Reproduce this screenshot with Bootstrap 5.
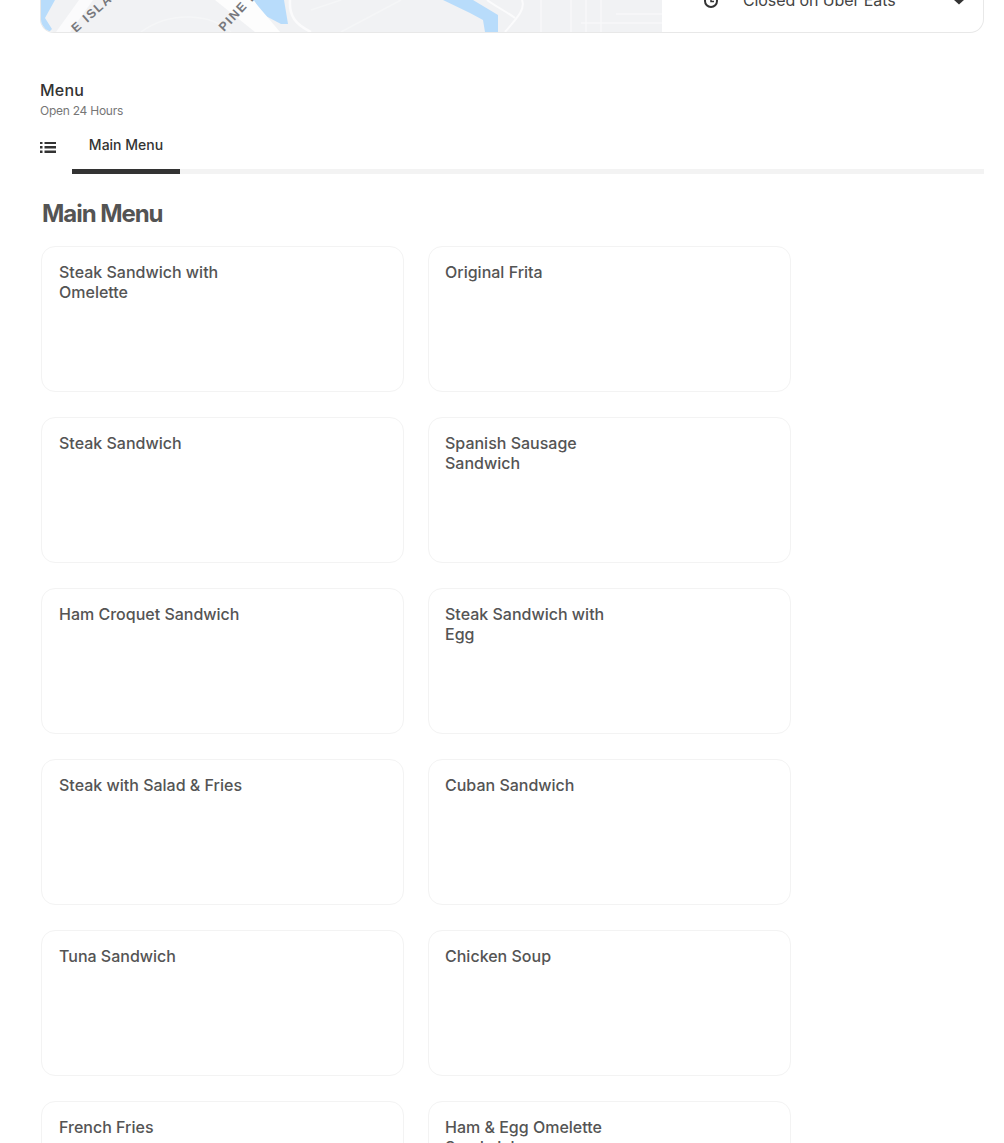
<!DOCTYPE html>
<html lang="en">
<head>
    <meta charset="UTF-8">
    <meta name="viewport" content="width=device-width, initial-scale=1.0">
    <title>Main Menu</title>
    <link href="https://cdn.jsdelivr.net/npm/bootstrap@5.3.0/dist/css/bootstrap.min.css" rel="stylesheet">
    <style>
        html, body { height: 1143px; overflow: hidden; }
        body { background: #fff; font-family: Inter, "Liberation Sans", sans-serif; color: #333; }
        .page-wrap { padding: 0 20px 0 40px; }
        .top-panel { height: 33px; border: 1px solid #e8e8e8; border-top: 0; border-radius: 0 0 14px 14px; overflow: hidden; }
        .map-pane { width: 621px; height: 32px; flex: none; }
        .status-pane { padding: 0 18px 0 41px; height: 44px; margin-top: -12px; }
        .status-icon { margin-top: 5px; flex: none; }
        .status-text { font-size: 16px; line-height: 24px; letter-spacing: -.1px; color: #444; margin-left: 24px; }
        .status-caret { margin-top: 7px; flex: none; }
        .menu-head { margin-top: 47px; }
        .menu-title { font-size: 16px; line-height: 20px; font-weight: 500; letter-spacing: .2px; color: #333; }
        .menu-sub { font-size: 12px; line-height: 22px; letter-spacing: -.25px; color: #767676; }
        .tabs-row { margin-top: 8px; height: 44px; }
        .tabs-icon { width: 32px; padding-top: 9px; }
        .tabs-track { border-bottom: 5px solid #f3f3f3; height: 44px; }
        .tab-active { width: 108px; height: 44px; border-bottom: 5px solid #333; font-size: 14px; font-weight: 500; text-align: center; padding-top: 5px; line-height: 20px; color: #333; }
        .section-title { font-size: 24px; line-height: 32px; font-weight: 700; letter-spacing: -1.05px; color: #545454; margin: 24px 0 16px 2px; }
        .item-grid { display: grid; grid-template-columns: 363px 363px; column-gap: 24px; row-gap: 25px; margin-left: 1px; }
        .item-card { height: 146px; border: 1px solid #f3f3f3; border-radius: 14px; padding: 15px 17px; }
        .item-card:nth-child(even) { padding-left: 16px; }
        .item-name { width: 190px; font-size: 16px; line-height: 20px; font-weight: 500; color: #545454; }
    </style>
</head>
<body>
    <div class="page-wrap">
        <div class="top-panel d-flex">
            <div class="map-pane">
                <svg class="d-block" width="621" height="32" viewBox="0 0 621 32">
                    <rect width="621" height="32" fill="#f1f2f4"/>
                    <!-- water -->
                    <path d="M0 0H14L4 18 11 29 8 32H0Z" fill="#b8dcfb"/>
                    <path d="M213 0H243L247 24H240L221 14Z" fill="#b8dcfb"/>
                    <path d="M402 0H432L457 15V32H444L442 20 429 13Z" fill="#b8dcfb"/>
                    <!-- roads -->
                    <path d="M38 0H52L29 32H15Z" fill="#fbfbfc"/>
                    <path d="M174 0H212L239 32H214Z" fill="#fdfdfd"/>
                    <path d="M249 0C248 16 254 24 270 32" stroke="#fbfbfc" stroke-width="2.5" fill="none"/>
                    <path d="M446 0C454 6 466 12 474 18M481 0C485 10 474 20 464 32" stroke="#fbfbfc" stroke-width="2" fill="none"/>
                    <path d="M500 0V32M530 0V32M545 0V32M560 0V32M575 14H621M540 23H621" stroke="#f7f8f9" stroke-width="1.5" fill="none"/>
                    <path d="M100 32C130 10 170 14 190 32M270 10L300 0M300 32L360 0" stroke="#f5f6f7" stroke-width="1.5" fill="none"/>
                    <!-- street labels -->
                    <text x="35" y="33" transform="rotate(-42 35 33)" font-family="Liberation Sans, sans-serif" font-size="12.5" font-weight="700" letter-spacing="1.6" fill="#77787c">E ISLA</text>
                    <text x="183" y="32" transform="rotate(-47 183 32)" font-family="Liberation Sans, sans-serif" font-size="12.5" font-weight="700" letter-spacing="1.6" fill="#77787c">PINE I</text>
                </svg>
            </div>
            <div class="status-pane flex-grow-1 d-flex align-items-start">
                <svg class="status-icon" width="16" height="16" viewBox="0 0 16 16">
                    <circle cx="8" cy="8" r="6" fill="none" stroke="#333" stroke-width="2"/>
                    <path d="M8 4.5V8.5H11" fill="none" stroke="#333" stroke-width="1.5"/>
                </svg>
                <span class="status-text flex-grow-1">Closed on Uber Eats</span>
                <svg class="status-caret" width="12" height="12" viewBox="0 0 12 12">
                    <path d="M0 4H12L6 9.5Z" fill="#333"/>
                </svg>
            </div>
        </div>

        <div class="menu-head">
            <div class="menu-title">Menu</div>
            <div class="menu-sub">Open 24 Hours</div>
        </div>

        <div class="tabs-row d-flex">
            <div class="tabs-icon">
                <svg class="d-block" width="16" height="16" viewBox="0 0 16 16">
                    <path d="M0 3H2.5V5H0ZM0 7H2.5V9.5H0ZM0 11.5H2.5V14H0ZM4.5 3H16V5H4.5ZM4.5 7H16V9.5H4.5ZM4.5 11.5H16V14H4.5Z" fill="#333"/>
                </svg>
            </div>
            <div class="tabs-track flex-grow-1">
                <div class="tab-active">Main Menu</div>
            </div>
        </div>

        <div class="section-title">Main Menu</div>

        <div class="item-grid">
            <div class="item-card"><div class="item-name">Steak Sandwich with Omelette</div></div>
            <div class="item-card"><div class="item-name">Original Frita</div></div>
            <div class="item-card"><div class="item-name">Steak Sandwich</div></div>
            <div class="item-card"><div class="item-name">Spanish Sausage Sandwich</div></div>
            <div class="item-card"><div class="item-name">Ham Croquet Sandwich</div></div>
            <div class="item-card"><div class="item-name">Steak Sandwich with Egg</div></div>
            <div class="item-card"><div class="item-name">Steak with Salad &amp; Fries</div></div>
            <div class="item-card"><div class="item-name">Cuban Sandwich</div></div>
            <div class="item-card"><div class="item-name">Tuna Sandwich</div></div>
            <div class="item-card"><div class="item-name">Chicken Soup</div></div>
            <div class="item-card"><div class="item-name">French Fries</div></div>
            <div class="item-card"><div class="item-name">Ham &amp; Egg Omelette Sandwich</div></div>
        </div>
    </div>
    <script src="https://cdn.jsdelivr.net/npm/bootstrap@5.3.0/dist/js/bootstrap.bundle.min.js"></script>
</body>
</html>
